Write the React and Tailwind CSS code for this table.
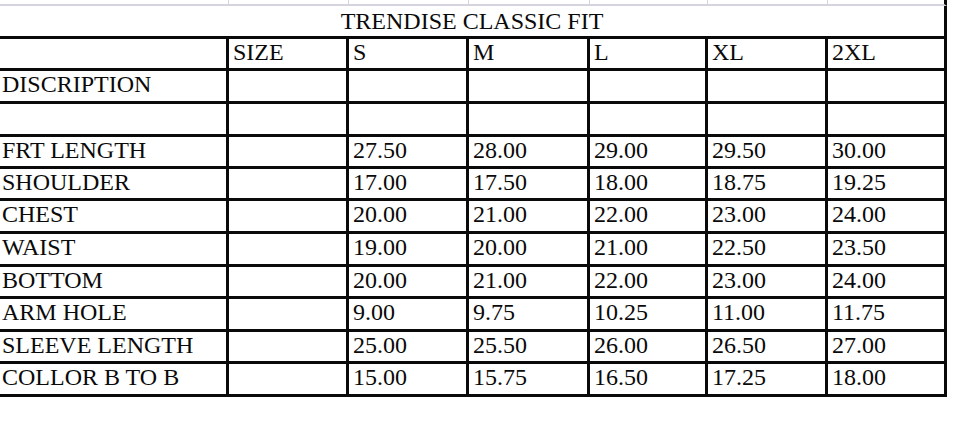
const ROWS = [
  { label: "", values: ["SIZE", "S", "M", "L", "XL", "2XL"], h: "h-[32px]" },
  { label: "DISCRIPTION", values: ["", "", "", "", "", ""], h: "h-[33px]" },
  { label: "", values: ["", "", "", "", "", ""], h: "h-[33px]" },
  { label: "FRT LENGTH", values: ["", "27.50", "28.00", "29.00", "29.50", "30.00"], h: "h-[32px]" },
  { label: "SHOULDER", values: ["", "17.00", "17.50", "18.00", "18.75", "19.25"], h: "h-[32px]" },
  { label: "CHEST", values: ["", "20.00", "21.00", "22.00", "23.00", "24.00"], h: "h-[33px]" },
  { label: "WAIST", values: ["", "19.00", "20.00", "21.00", "22.50", "23.50"], h: "h-[33px]" },
  { label: "BOTTOM", values: ["", "20.00", "21.00", "22.00", "23.00", "24.00"], h: "h-[32px]" },
  { label: "ARM HOLE", values: ["", "9.00", "9.75", "10.25", "11.00", "11.75"], h: "h-[33px]" },
  { label: "SLEEVE LENGTH", values: ["", "25.00", "25.50", "26.00", "26.50", "27.00"], h: "h-[32px]" },
  { label: "COLLOR B TO B", values: ["", "15.00", "15.75", "16.50", "17.25", "18.00"], h: "h-[33px]" },
];

const cols = "grid grid-cols-[229px_120px_120px_121px_118px_120px_119px] w-[947px]";
const cell = "border-r-[3px] border-b-[3px] border-[#0a0a0a] pl-[4px] leading-[27.6px] whitespace-nowrap";

function Row({ label, values, h }) {
  return (
    <div className={`${cols} ${h}`}>
      <div className={`${cell} !pl-[2px]`}>{label}</div>
      {values.map((v, i) => (
        <div key={i} className={cell}>{v}</div>
      ))}
    </div>
  );
}

export default function App() {
  return (
    <div className="w-[966px] h-[428px] bg-white overflow-hidden text-[#0a0a0a] text-[24px]" style={{ fontFamily: '"Liberation Serif", "Times New Roman", serif' }}>
      {/* faint spreadsheet lines above the sheet */}
      <div className={`${cols} h-[6px]`}>
        {[0, 1, 2, 3, 4, 5].map((i) => (
          <div key={i} className="border-r border-b-2 border-[#d4d4e0]" />
        ))}
        <div className="border-b-2 border-[#d4d4e0] border-r-[3px] border-r-[#0a0a0a]" />
      </div>

      {/* title */}
      <div className="w-[947px] h-[33px] border-r-[3px] border-b-[3px] border-[#0a0a0a] text-center leading-[27.6px] pt-[2px]">
        TRENDISE CLASSIC FIT
      </div>

      {ROWS.map((r, i) => (
        <Row key={i} {...r} />
      ))}
    </div>
  );
}
